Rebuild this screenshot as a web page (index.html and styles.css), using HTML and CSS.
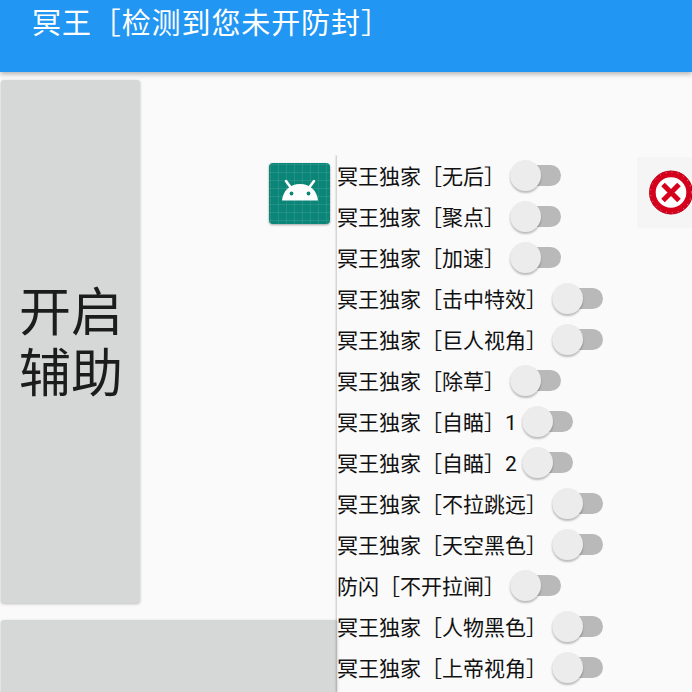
FILE: index.html
```html
<!DOCTYPE html>
<html lang="zh">
<head>
<meta charset="utf-8">
<title>冥王</title>
<link rel="stylesheet" href="styles.css">
</head>
<body>
<header class="appbar"><h1 class="title">冥王［检测到您未开防封］</h1></header>
<main class="content">
  <div class="left">
    <div class="top">
      <button class="btn btn-main">开启<br>辅助</button>
      <svg class="appicon" viewBox="0 0 61 61" aria-hidden="true">
        <defs>
          <pattern id="grid" width="8" height="8" patternUnits="userSpaceOnUse" x="2" y="2">
            <path d="M8 0V8H0" fill="none" stroke="#fff" stroke-opacity=".17" stroke-width="1"/>
          </pattern>
        </defs>
        <rect width="61" height="61" rx="4" fill="#0b8577"/>
        <rect width="61" height="61" rx="4" fill="url(#grid)"/>
        <path d="M13 37.5C14 28 20.5 21 31 21S48 28 49 37.5Z" fill="#fff"/>
        <path d="M17 18 22.5 25.5M45 18 39.5 25.5" stroke="#fff" stroke-width="2.6" stroke-linecap="round"/>
        <circle cx="22.5" cy="30.5" r="1.9" fill="#0b8577"/>
        <circle cx="39.5" cy="30.5" r="1.9" fill="#0b8577"/>
      </svg>
    </div>
    <button class="btn btn-second"></button>
  </div>
  <ul class="list">
    <li class="row"><span class="label">冥王独家［无后］</span><span class="switch"></span></li>
    <li class="row"><span class="label">冥王独家［聚点］</span><span class="switch"></span></li>
    <li class="row"><span class="label">冥王独家［加速］</span><span class="switch"></span></li>
    <li class="row"><span class="label">冥王独家［击中特效］</span><span class="switch"></span></li>
    <li class="row"><span class="label">冥王独家［巨人视角］</span><span class="switch"></span></li>
    <li class="row"><span class="label">冥王独家［除草］</span><span class="switch"></span></li>
    <li class="row"><span class="label">冥王独家［自瞄］1</span><span class="switch"></span></li>
    <li class="row"><span class="label">冥王独家［自瞄］2</span><span class="switch"></span></li>
    <li class="row"><span class="label">冥王独家［不拉跳远］</span><span class="switch"></span></li>
    <li class="row"><span class="label">冥王独家［天空黑色］</span><span class="switch"></span></li>
    <li class="row"><span class="label">防闪［不开拉闸］</span><span class="switch"></span></li>
    <li class="row"><span class="label">冥王独家［人物黑色］</span><span class="switch"></span></li>
    <li class="row"><span class="label">冥王独家［上帝视角］</span><span class="switch"></span></li>
  </ul>
  <div class="close">
    <svg class="close-icon" viewBox="0 0 46 46" aria-hidden="true">
      <circle cx="23" cy="22.5" r="18.5" fill="#fff" stroke="#d5001c" stroke-width="6.4"/>
      <circle cx="23" cy="22.5" r="21.5" fill="none" stroke="#b80018" stroke-width=".8"/>
      <circle cx="23" cy="22.5" r="20.4" fill="none" stroke="#fff" stroke-opacity=".65" stroke-width=".8" stroke-dasharray="1 5"/>
      <path d="M15 14.5 31 30.5M31 14.5 15 30.5" stroke="#d5001c" stroke-width="5"/>
    </svg>
  </div>
</main>
</body>
</html>
```

FILE: styles.css
```css
* { box-sizing: border-box; }
html, body { margin: 0; height: 692px; overflow: hidden; }
body {
  background: #fafafa;
  font-family: "Roboto", "Noto Sans CJK SC", sans-serif;
  color: #111;
}
.appbar {
  height: 72px;
  padding-left: 32px;
  background: #2196f3;
  box-shadow: 0 2px 5px rgba(0, 0, 0, .3);
  position: relative;
}
.title {
  margin: 0;
  font-size: 29px;
  font-weight: 400;
  line-height: 48px;
  color: #fff;
  letter-spacing: .9px;
}
.content {
  display: flex;
  height: 620px;
}
.left {
  width: 337px;
  flex: none;
  padding: 8px 0 0 1px;
  display: flex;
  flex-direction: column;
  gap: 17px;
}
.top {
  display: flex;
  align-items: flex-start;
}
.btn {
  display: block;
  border: 0;
  padding: 0;
  background: #d6d7d7;
  border-radius: 3px;
  box-shadow: 0 1px 3px rgba(0, 0, 0, .25);
  font-family: inherit;
  color: #1c1c1c;
}
.btn-main {
  width: 139px;
  height: 523px;
  padding: 5px 0 0 1px;
  font-size: 52px;
  line-height: 61px;
  font-weight: 400;
}
.btn-second {
  flex: 1;
  min-height: 100px;
  border-radius: 3px 0 0 0;
}
.appicon {
  width: 61px;
  height: 61px;
  margin: 83px 0 0 129px;
  filter: drop-shadow(0 1px 1px rgba(0, 0, 0, .35));
}
.list {
  list-style: none;
  margin: 83px 0 0;
  padding: 0;
  width: 300px;
  flex: none;
  box-shadow: -1px 0 2px rgba(0, 0, 0, .22);
  clip-path: inset(0 0 0 -4px);
}
.row {
  display: flex;
  align-items: center;
  height: 41px;
  font-size: 21px;
  white-space: nowrap;
}
.label {
  display: block;
  padding-bottom: 2px;
}
.switch {
  position: relative;
  display: block;
  width: 51px;
  height: 21px;
  margin-left: 5px;
  border-radius: 11px;
  background: #b9b9b9;
}
.switch::before {
  content: "";
  position: absolute;
  left: 0;
  top: -5px;
  width: 31px;
  height: 31px;
  border-radius: 50%;
  background: #ececec;
  box-shadow: 0 2px 2px rgba(0, 0, 0, .25);
}
.close {
  margin-top: 85px;
  width: 55px;
  height: 71px;
  flex: none;
  background: #f5f5f5;
  display: flex;
  align-items: center;
  padding-left: 11px;
}
.close-icon {
  width: 46px;
  height: 46px;
  flex: none;
}
```
